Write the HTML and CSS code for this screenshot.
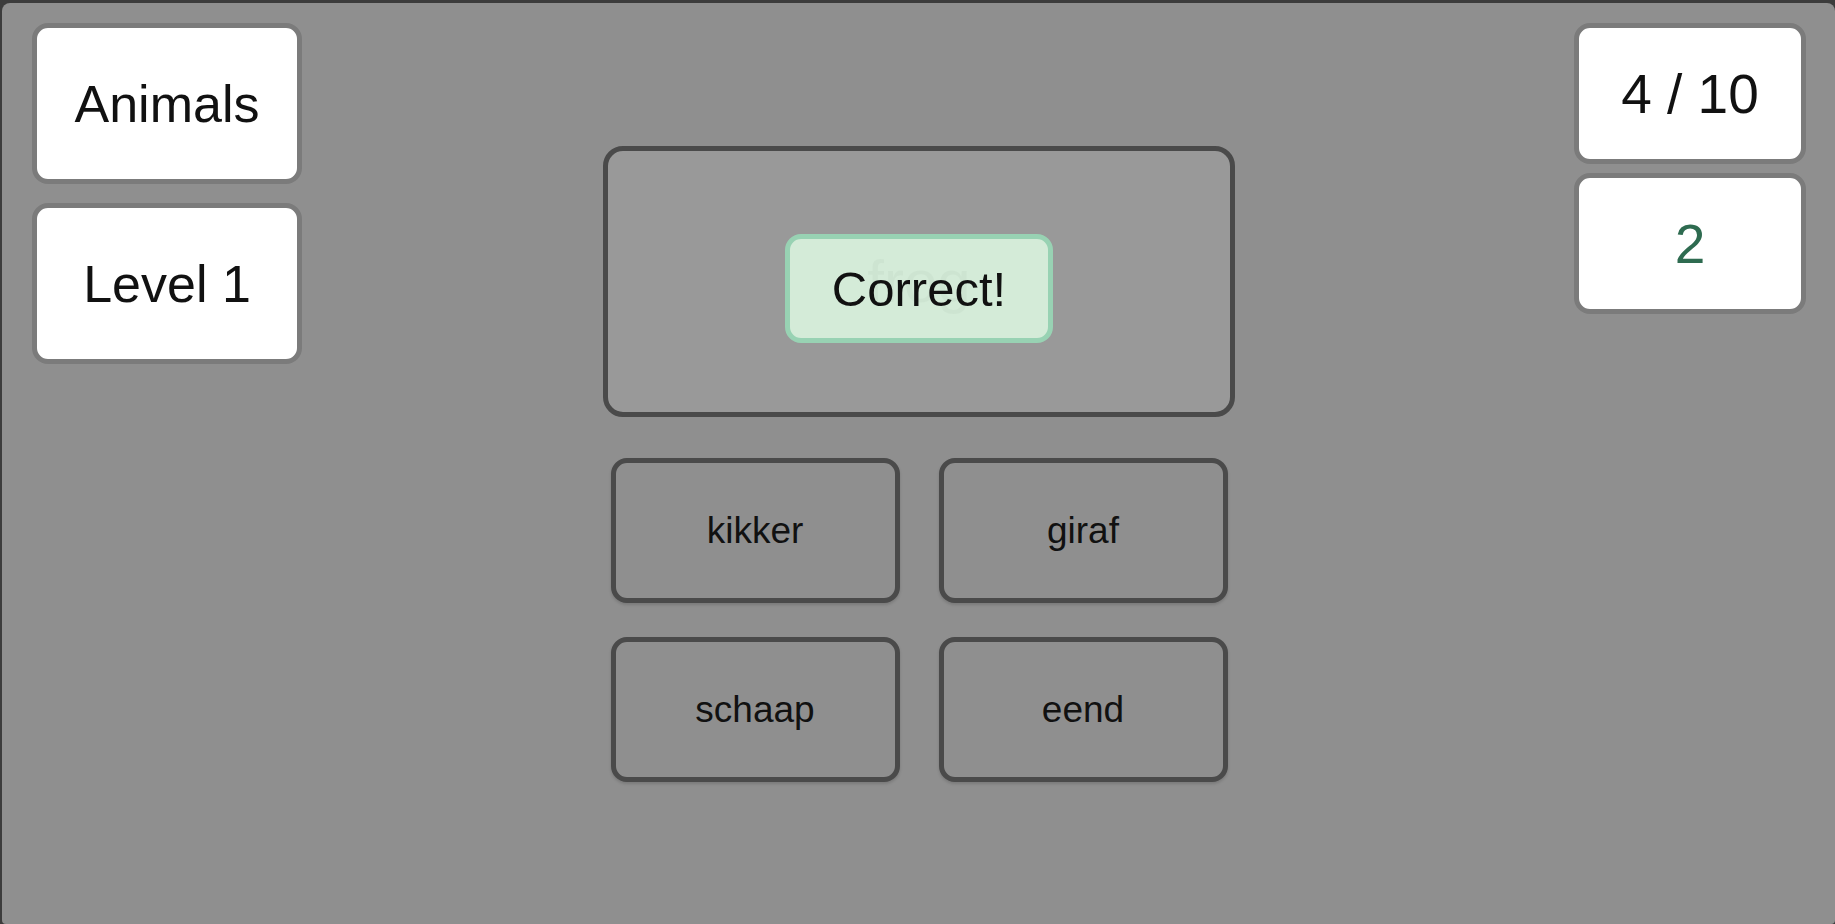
FILE: index.html
```html
<!DOCTYPE html>
<html lang="en">
<head>
<meta charset="utf-8">
<title>Animals quiz</title>
<link rel="stylesheet" href="styles.css">
</head>
<body>
<div class="app">
  <aside class="side side-left">
    <div class="info info-left">Animals</div>
    <div class="info info-left">Level 1</div>
  </aside>
  <main class="stage">
    <div class="prompt">
      <span class="word">frog</span>
      <div class="feedback">Correct!</div>
    </div>
    <div class="answers">
      <button class="answer">kikker</button>
      <button class="answer">giraf</button>
      <button class="answer">schaap</button>
      <button class="answer">eend</button>
    </div>
  </main>
  <aside class="side side-right">
    <div class="info info-right">4 / 10</div>
    <div class="info info-right score">2</div>
  </aside>
</div>
</body>
</html>
```

FILE: styles.css
```css
html, body {
  margin: 0;
  padding: 0;
  height: 100%;
  overflow: hidden;
}

body {
  background: #3c3c3c;
  font-family: "Liberation Sans", Arial, sans-serif;
  color: #111;
}

.app {
  box-sizing: border-box;
  margin: 3px 0 0 2px;
  height: calc(100vh - 3px);
  padding: 20px 29px 0 30px;
  background: #8f8f8f;
  border-radius: 8px 8px 4px 4px;
  display: grid;
  grid-template-columns: 1fr auto 1fr;
  align-items: start;
}

.side {
  display: flex;
  flex-direction: column;
}

.side-left {
  justify-self: start;
  gap: 19px;
}

.side-right {
  justify-self: end;
  gap: 9px;
}

.info {
  box-sizing: border-box;
  background: #ffffff;
  border: 5px solid #7b7b7b;
  border-radius: 16px;
  display: flex;
  align-items: center;
  justify-content: center;
  color: #111;
}

.info-left {
  width: 270px;
  height: 161px;
  font-size: 52px;
}

.info-right {
  width: 232px;
  height: 141px;
  font-size: 55px;
}

.score {
  color: #2e6b50;
}

.stage {
  padding-top: 123px;
  display: flex;
  flex-direction: column;
  align-items: center;
}

.prompt {
  position: relative;
  box-sizing: border-box;
  width: 632px;
  height: 271px;
  border: 5px solid #4a4a4a;
  border-radius: 20px;
  background: #999999;
  display: flex;
  align-items: center;
  justify-content: center;
}

.word {
  font-size: 60px;
  color: #222;
}

.feedback {
  position: absolute;
  top: 83px;
  left: 50%;
  transform: translateX(-50%);
  box-sizing: border-box;
  width: 268px;
  height: 109px;
  border: 5px solid #98d2b3;
  border-radius: 16px;
  background: rgba(215, 239, 219, 0.95);
  display: flex;
  align-items: center;
  justify-content: center;
  font-size: 49px;
  color: #111;
}

.answers {
  margin-top: 41px;
  display: grid;
  grid-template-columns: 289px 289px;
  column-gap: 39px;
  row-gap: 34px;
}

.answer {
  box-sizing: border-box;
  height: 145px;
  border: 5px solid #4a4a4a;
  border-radius: 16px;
  background: #8f8f8f;
  box-shadow: 0 2px 3px rgba(0, 0, 0, 0.15);
  font-family: "Liberation Sans", Arial, sans-serif;
  font-size: 37px;
  color: #111;
  padding: 0;
  cursor: pointer;
}
```
